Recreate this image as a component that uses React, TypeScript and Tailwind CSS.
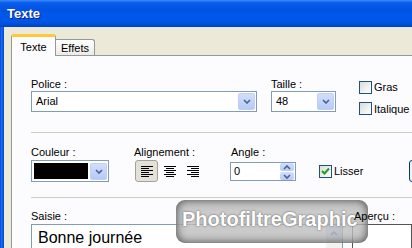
const FONT = "font-['Liberation_Sans',Arial,sans-serif]";

const Chevron = ({ up = false }: { up?: boolean }) => (
  <svg width="8" height="5" viewBox="0 0 8 5" className={up ? 'rotate-180' : ''}>
    <path d="M1 1 L4 4 L7 1" fill="none" stroke="#4d6185" strokeWidth="1.6" />
  </svg>
);

const DropButton = () => (
  <div className="flex h-[17px] w-[17px] items-center justify-center rounded-[2px] border border-[#bfcff7] bg-[linear-gradient(to_bottom,#d2defd,#b6c9f7)]">
    <Chevron />
  </div>
);

const Combo = ({ value, width }: { value: string; width: string }) => (
  <div className={`flex h-[21px] items-center border border-[#7f9db9] bg-white pr-px ${width}`}>
    <span className="flex-1 pl-[4px] text-[11px] leading-none">{value}</span>
    <DropButton />
  </div>
);

const CheckBox = ({ checked = false }: { checked?: boolean }) => (
  <div className="flex h-[13px] w-[13px] shrink-0 items-center justify-center border border-[#1c5180] bg-[linear-gradient(135deg,#dcdcd5,#ffffff)]">
    {checked && (
      <svg width="9" height="9" viewBox="0 0 9 9">
        <path d="M1 4 L3.5 6.5 L8 1.5" fill="none" stroke="#21a121" strokeWidth="2" />
      </svg>
    )}
  </div>
);

const AlignIcon = ({ mode }: { mode: 'left' | 'center' | 'right' }) => {
  const rows = [12, 8, 12, 8, 12, 8];
  return (
    <svg width="12" height="11" viewBox="0 0 12 11">
      {rows.map((w, i) => {
        const x = mode === 'left' ? 0 : mode === 'center' ? (12 - w) / 2 : 12 - w;
        return <rect key={i} x={x} y={i * 2} width={w} height="1" fill="#000" />;
      })}
    </svg>
  );
};

export default function App() {
  return (
    <div className={`relative h-[248px] w-[412px] overflow-hidden bg-[#ece9d8] text-black ${FONT}`}>
      {/* Title bar */}
      <div className="flex h-[27px] items-center bg-[linear-gradient(to_bottom,#3d8cf6_0%,#0a5cee_10%,#0053e3_35%,#0058ea_60%,#0054e3_85%,#0040c0_100%)] pl-[7px]">
        <span className="text-[13px] font-bold text-white [text-shadow:1px_1px_0_#0a1e7a]">Texte</span>
      </div>

      <div className="flex h-[221px]">
        {/* Window border */}
        <div className="w-[4px] shrink-0 bg-[linear-gradient(to_right,#0a3fd0,#1b6cf0,#0a5ae6,#0046d5)]" />

        <div className="flex min-w-0 flex-1 flex-col">
          {/* Tabs */}
          <div className="flex h-[28px] shrink-0 items-end pl-[7px]">
            <div className="relative z-10 -mb-px flex h-[22px] w-[45px] items-start justify-center rounded-t-[3px] border-x border-t-[3px] border-x-[#919b9c] border-t-[#ffc83c] bg-[#fcfcfe] pt-[2px] text-[11px]">
              Texte
            </div>
            <div className="flex h-[16px] w-[39px] items-center justify-center rounded-tr-[3px] border-r border-t border-[#919b9c] bg-[linear-gradient(to_bottom,#ffffff,#ecebe6)] pt-px text-[11px]">
              Effets
            </div>
          </div>

          {/* Panel */}
          <div className="ml-[7px] flex flex-1 flex-col overflow-hidden border-l border-t border-[#919b9c] bg-[#fcfcfe] pl-[19px] pt-[21px] text-[11px]">
            {/* Row 1 */}
            <div className="flex shrink-0">
              <div className="flex w-[240px] shrink-0 flex-col">
                <span className="h-[14px] leading-[14px]">Police :</span>
                <Combo value="Arial" width="w-[226px]" />
              </div>
              <div className="flex w-[88px] shrink-0 flex-col">
                <span className="h-[14px] leading-[14px]">Taille :</span>
                <Combo value="48" width="w-[65px]" />
              </div>
              <div className="flex shrink-0 flex-col gap-[5px] pt-[2px]">
                <label className="flex items-center gap-[2px]">
                  <CheckBox />
                  <span>Gras</span>
                </label>
                <label className="flex items-center gap-[2px]">
                  <CheckBox />
                  <span>Italique</span>
                </label>
              </div>
            </div>

            <div className="mt-[15px] h-px shrink-0 bg-[#cfcdc0]" />

            {/* Row 2 */}
            <div className="mt-[12px] flex shrink-0">
              <div className="flex w-[103px] shrink-0 flex-col">
                <span className="h-[15px] leading-[14px]">Couleur :</span>
                <div className="flex h-[22px] w-[78px] items-center border border-[#7f9db9] bg-white p-px">
                  <div className="mr-px h-full flex-1 border border-white bg-black" />
                  <DropButton />
                </div>
              </div>
              <div className="flex w-[96px] shrink-0 flex-col">
                <span className="h-[15px] leading-[14px]">Alignement :</span>
                <div className="ml-px flex">
                  <div className="flex h-[22px] w-[23px] items-center justify-center rounded-[3px] border border-[#a5a293] bg-[#e4e2d8]">
                    <AlignIcon mode="left" />
                  </div>
                  <div className="flex h-[22px] w-[23px] items-center justify-center">
                    <AlignIcon mode="center" />
                  </div>
                  <div className="flex h-[22px] w-[23px] items-center justify-center">
                    <AlignIcon mode="right" />
                  </div>
                </div>
              </div>
              <div className="flex w-[89px] shrink-0 flex-col">
                <span className="h-[15px] pl-px leading-[14px]">Angle :</span>
                <div className="mt-[2px] flex h-[19px] w-[66px] items-center border border-[#7f9db9] bg-white pr-px">
                  <span className="flex-1 pl-[3px] leading-none">0</span>
                  <div className="flex flex-col gap-px">
                    <div className="flex h-[8px] w-[14px] items-center justify-center rounded-[2px] bg-[linear-gradient(to_bottom,#d2defd,#b6c9f7)]">
                      <Chevron up />
                    </div>
                    <div className="flex h-[8px] w-[14px] items-center justify-center rounded-[2px] bg-[linear-gradient(to_bottom,#d2defd,#b6c9f7)]">
                      <Chevron />
                    </div>
                  </div>
                </div>
              </div>
              <div className="flex w-[90px] shrink-0 flex-col pt-[18px]">
                <label className="flex items-center gap-[2px]">
                  <CheckBox checked />
                  <span>Lisser</span>
                </label>
              </div>
              <div className="mt-[15px] h-[22px] w-[40px] shrink-0 rounded-[3px] border border-[#003c74] bg-[#f4f3ee]" />
            </div>

            <div className="mt-[15px] h-px shrink-0 bg-[#cfcdc0]" />

            {/* Row 3 */}
            <div className="mt-[11px] flex shrink-0">
              <div className="flex w-[321px] shrink-0 flex-col">
                <span className="h-[15px] leading-[14px]">Saisie :</span>
                <div className="flex h-[40px] w-[312px] border border-[#7f9db9] bg-white">
                  <span className="flex-1 pl-[6px] pt-[3px] text-[16px] leading-[20px]">Bonne journée</span>
                  <div className="flex w-[16px] flex-col bg-[#f3f3ef]">
                    <div className="flex h-[16px] items-center justify-center rounded-[2px] border border-[#c8d6f8] bg-[linear-gradient(to_right,#dbe6fd,#bccef7)]">
                      <Chevron up />
                    </div>
                  </div>
                </div>
              </div>
              <div className="flex min-w-0 flex-1 flex-col">
                <span className="relative z-20 h-[15px] pl-[2px] leading-[14px]">Aperçu :</span>
                <div className="h-[40px] border border-[#555] bg-white" />
              </div>
            </div>
          </div>
        </div>
      </div>

      {/* Watermark overlay */}
      <div className="absolute left-[176px] top-[200px] h-[43px] w-[192px] overflow-hidden rounded-[9px] bg-[#bdbdbd]/80 pl-[6px] pt-[8px] shadow-[inset_0_0_10px_rgba(50,50,50,0.9)]">
        <span className="whitespace-nowrap text-[20px] font-bold leading-[22px] text-white [text-shadow:0_0_2px_rgba(60,60,60,0.9)]">
          PhotofiltreGraphic
        </span>
      </div>
    </div>
  );
}
